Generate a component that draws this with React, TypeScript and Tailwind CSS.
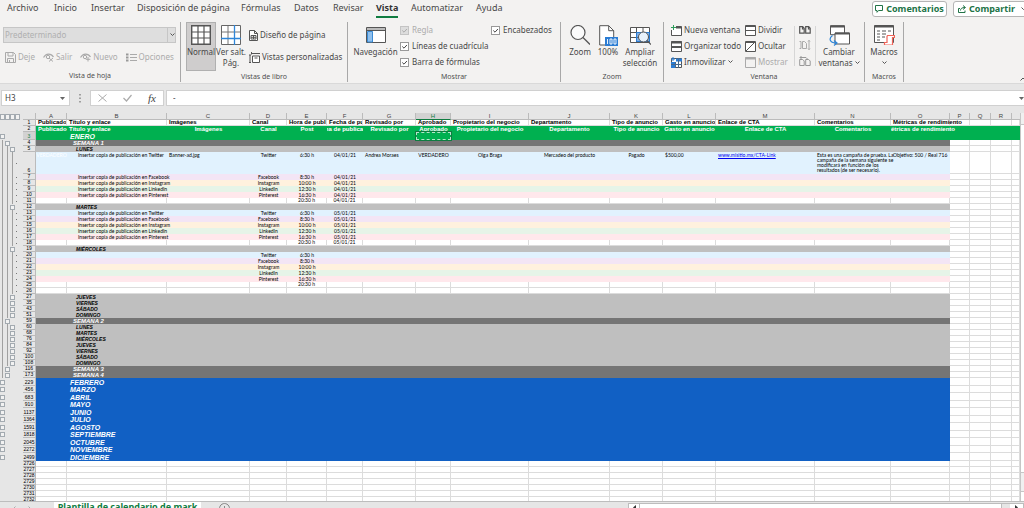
import type { ReactNode } from 'react';

/* ---------- icons ---------- */

type IconProps = { children: ReactNode; box: string; size: string };
function Svg({ children, box, size }: IconProps) {
  return (
    <svg viewBox={box} className={`shrink-0 ${size}`} fill="none" stroke="#555" aria-hidden="true">
      {children}
    </svg>
  );
}

const SaveIcon = () => (
  <Svg box="0 0 11 11" size="h-[11px] w-[11px]">
    <path d="M.5.5h8l2 2v8H.5zM3 .5v3.500h5v-3.500M2.500 10.500v-4h6v4M4.500 8v2" stroke="#aaa" />
  </Svg>
);
const EyeIcon = ({ add }: { add?: boolean }) => (
  <Svg box="0 0 11 9" size="h-[9px] w-[11px]">
    <path d="M.5 4.500C3 0 8 0 10.500 4" stroke="#aaa" strokeWidth="1.200" />
    <circle cx="5" cy="4" r="1.700" stroke="#aaa" />
    {add ? <path d="M8 4v4.500M5.800 6.300h4.500" stroke="#aaa" /> : <path d="M6 5l4 3.500M10 5L6 8.500" stroke="#aaa" />}
  </Svg>
);
const ListIcon = () => (
  <Svg box="0 0 11 9" size="h-[9px] w-[11px]">
    <path d="M0 1.500h2.500M0 4.500h2.500M0 7.500h2.500" stroke="#999" strokeWidth="2" />
    <path d="M4 1.500h7M4 4.500h7M4 7.500h7" stroke="#aaa" />
  </Svg>
);
const GridIcon = () => (
  <Svg box="0 0 20 20" size="h-5 w-5">
    <path d="M.7.7h18.600v18.600H.7z" fill="#fff" strokeWidth="1.400" />
    <path d="M7 1v18M13 1v18M1 7h18M1 13h18" strokeWidth="1.200" />
  </Svg>
);
const PageBreakIcon = () => (
  <Svg box="0 0 20 20" size="h-5 w-5">
    <path d="M.5.5h19v19H.5z" fill="#fff" stroke="#666" />
    <path d="M7 1v12M1 7h12M7 14v5M14 7h5" stroke="#777" />
    <path d="M13.500 0v20M0 13.500h20" stroke="#2f86d8" strokeWidth="1.300" />
  </Svg>
);
const PageLayoutIcon = () => (
  <Svg box="0 0 9 11" size="h-[11px] w-[9px]">
    <path d="M.5.5h5l3 3v7h-8zM5.500.5v3h3" fill="#fff" />
    <path d="M2 5.500h5v3.500H2zM4.500 5.500v3.500M2 7.300h5" />
  </Svg>
);
const CustomViewsIcon = () => (
  <Svg box="0 0 11 11" size="h-[11px] w-[11px]">
    <path d="M3.500 4h7v6.500h-7z" fill="#fff" />
    <path d="M2.500 1.500h8.500M2.500 0v2.500M0 3h2M0 10.500h2M1 3v7.500M5.500 6h3" />
  </Svg>
);
const NavIcon = () => (
  <Svg box="0 0 20 16" size="h-4 w-5">
    <path d="M.5.5h19v15H.5z" fill="#fff" />
    <path d="M1 1h18v2.500H1z" fill="#bbb" stroke="none" />
    <path d="M.5 3.500h19" />
    <path d="M1.500 4.500h5v10.500h-5z" fill="#8fc0ee" stroke="#3b8bd4" />
  </Svg>
);
const MagnifierIcon = () => (
  <Svg box="0 0 20 20" size="h-5 w-5">
    <circle cx="8" cy="7.500" r="7" fill="#fbfbfb" strokeWidth="1.200" />
    <path d="M13 12.500l7 7" strokeWidth="1.300" />
  </Svg>
);
const HundredIcon = () => (
  <Svg box="0 0 19 21" size="h-[21px] w-[19px]">
    <path d="M.7.700h9l5 5v14.300H.7z" fill="#fff" />
    <path d="M9.700.7v5h5" />
    <path d="M6 12h13v9H6z" fill="#2b7cd3" stroke="none" />
    <path d="M8.500 14v5M11 14h2v5h-2zM15 14h2v5h-2z" stroke="#fff" strokeWidth=".9" />
  </Svg>
);
const ZoomSelectionIcon = () => (
  <Svg box="0 0 21 19" size="h-[19px] w-[21px]">
    <path d="M.5 1.500h19v15H.5zM.5 6.500h19M.5 11.500h19M6.500 1.500v15M13 1.500v15" fill="#fff" />
    <path d="M6.500 6.500h13v9h-13z" fill="#2b7cd3" fillOpacity=".6" stroke="#2b7cd3" />
    <circle cx="13.500" cy="11" r="5" fill="#e8f2fc" />
    <path d="M17 14.500l4 4" strokeWidth="1.200" />
  </Svg>
);
const NewWindowIcon = () => (
  <Svg box="0 0 11 11" size="h-[11px] w-[11px]">
    <path d="M5 1.500h5.500v9H.5V5" fill="#fff" />
    <path d="M5 2.500h5.500" strokeWidth="2" />
    <path d="M2.500 0v5M0 2.500h5" stroke="#2e9e5b" />
  </Svg>
);
const ArrangeIcon = () => (
  <Svg box="0 0 11 11" size="h-[11px] w-[11px]">
    <path d="M.5.5h10v10H.5z" fill="#fff" />
    <path d="M0 1.500h11M0 6h11" strokeWidth="2" />
  </Svg>
);
const FreezeIcon = () => (
  <Svg box="0 0 11 11" size="h-[11px] w-[11px]">
    <path d="M.5 1.500h10v9H.5z" fill="#fff" />
    <path d="M5 1.500h6v3H5zM0 5h4v6H0z" fill="#2b7cd3" stroke="none" />
    <path d="M0 7.500h11M4.500 5v6M7.500 2v9" stroke="#4a6a8a" />
    <path d="M2 0v4M0 2h4" stroke="#2b7cd3" />
  </Svg>
);
const SplitIcon = () => (
  <Svg box="0 0 11 11" size="h-[11px] w-[11px]">
    <path d="M.5.5h10v10H.5zM0 5.500h11M1 1.500h9" fill="#fff" />
  </Svg>
);
const HideIcon = () => (
  <Svg box="0 0 11 11" size="h-[11px] w-[11px]">
    <path d="M.5.5h10v10H.5zM1 10l9-9M1 1.500h9" fill="#fff" />
  </Svg>
);
const ShowIcon = () => (
  <Svg box="0 0 11 11" size="h-[11px] w-[11px]">
    <path d="M.5.5h10v10H.5z" stroke="#aaa" />
    <path d="M0 1.500h11" stroke="#aaa" strokeWidth="2" />
  </Svg>
);
const SideBySideIcon = () => (
  <Svg box="0 0 12 8" size="h-2 w-3">
    <path d="M.7.7h3l1.500 1.500v5H.7zM6.700.7h3l1.500 1.500v5H6.700zM3.500 0v3h2M9.500 0v3h2" strokeWidth="1.200" />
  </Svg>
);
const SyncIcon = () => (
  <Svg box="0 0 12 10" size="h-[10px] w-3">
    <path d="M.5 1.500h1.500v7H.5M3.500 1.500h2l2 2v5h-4zM10 0v10M9 1.500l1-1 1 1M9 8.500l1 1 1-1" stroke="#aaa" />
  </Svg>
);
const ResetIcon = () => (
  <Svg box="0 0 12 11" size="h-[11px] w-3">
    <path d="M.7 4.500h3l1.500 1.500v4.500H.7zM6.700 4.500h3l1.500 1.500v4.500H6.700zM1 2.500h6l1.500 1.500M2.500 1L1 2.500 2.500 4" stroke="#999" />
  </Svg>
);
const SwitchIcon = () => (
  <Svg box="0 0 21 21" size="h-[21px] w-[21px]">
    <path d="M1.500.7h14v9h-14z" fill="#fff" />
    <path d="M1.500 1.500h14" strokeWidth="2" />
    <path d="M6 8h14.500v11H6z" fill="#fff" />
    <path d="M6 8.500h14.500" strokeWidth="2" />
    <path d="M3.500 10.500c-4 3-3 7 3.500 7.500M5 15.500l3 2.500-3 2.500" stroke="#2f86d8" strokeWidth="1.200" />
  </Svg>
);
const MacrosIcon = () => (
  <Svg box="0 0 21 20" size="h-5 w-[21px]">
    <path d="M.5.5h19v17H.5z" fill="#fff" />
    <path d="M.5 1.500h19" strokeWidth="2" />
    <path d="M3 6h3M8 6h4M14 6h3M3 9h3M8 9h4M3 12h3M8 12h3M3 15h3" />
    <path d="M13.500 10.500h7v2h-2v7.500h-8v-2.500h2.500v-6z" fill="#fff" stroke="#f0655a" strokeWidth="1.200" />
  </Svg>
);
const Chevron = () => (
  <Svg box="0 0 5 4" size="h-1 w-[5px]">
    <path d="M.5.5l2 2 2-2" />
  </Svg>
);

/* ---------- ribbon ---------- */

function Group({ label, width, children }: { label: string; width: string; children: ReactNode }) {
  return (
    <section className={`flex h-[60px] shrink-0 flex-col border-r border-[#a8a8a8] ${width}`}>
      <div className="flex h-[50px]">{children}</div>
      <h2 className="text-center text-[7px] leading-[12px] text-[#505050]">{label}</h2>
    </section>
  );
}

function Small({ icon, label, off, arrow }: { icon: ReactNode; label: string; off?: boolean; arrow?: boolean }) {
  return (
    <button
      type="button"
      disabled={off}
      className={`flex h-4 items-center gap-[2px] whitespace-nowrap text-[8px] ${off ? 'text-[#ababab]' : 'text-[#484848]'}`}
    >
      {icon}
      <span>{label}</span>
      {arrow && <Chevron />}
    </button>
  );
}

function Big({ icon, width, active, children }: { icon: ReactNode; width: string; active?: boolean; children: ReactNode }) {
  return (
    <button
      type="button"
      className={`flex h-[49px] shrink-0 flex-col items-center whitespace-nowrap pt-px text-[8px] leading-[11px] text-[#484848] ${width} ${active ? 'border border-[#b0b0b0] bg-[#cfcdcd]' : 'border border-transparent'}`}
    >
      <span className="flex h-[22px] items-center">{icon}</span>
      <span>{children}</span>
    </button>
  );
}

function Check({ label, off }: { label: string; off?: boolean }) {
  return (
    <label className={`flex h-4 items-center gap-[3px] whitespace-nowrap text-[8px] ${off ? 'text-[#ababab]' : 'text-[#484848]'}`}>
      <span className="grid h-[9px] w-[9px]">
        <input
          type="checkbox"
          defaultChecked
          disabled={off}
          className="col-start-1 row-start-1 h-[9px] w-[9px] appearance-none border border-[#999] bg-white disabled:border-[#c4c4c4] disabled:bg-[#ddd]"
        />
        <svg viewBox="0 0 9 9" className="pointer-events-none col-start-1 row-start-1 h-[9px] w-[9px]" fill="none" stroke={off ? '#aaa' : '#444'} aria-hidden="true">
          <path d="M2.300 4.500L4 6.200 6.900 3" />
        </svg>
      </span>
      {label}
    </label>
  );
}

const TABS = [
  { name: 'Archivo', width: 'w-[47px]' },
  { name: 'Inicio', width: 'w-[37px]' },
  { name: 'Insertar', width: 'w-[46px]' },
  { name: 'Disposición de página', width: 'w-[104px]' },
  { name: 'Fórmulas', width: 'w-[53px]' },
  { name: 'Datos', width: 'w-[39px]' },
  { name: 'Revisar', width: 'w-[43px]' },
  { name: 'Vista', width: 'w-[35px]' },
  { name: 'Automatizar', width: 'w-[65px]' },
  { name: 'Ayuda', width: 'w-[40px]' },
];

function TopBar() {
  return (
    <nav className="flex h-5 shrink-0 overflow-hidden pl-[7px]">
      {TABS.map((t) => (
        <div key={t.name} className={`flex shrink-0 items-start ${t.width}`}>
          <a
            href="#"
            className={`whitespace-nowrap text-[9px] leading-[16px] ${t.name === 'Vista' ? 'border-b-2 border-[#107c41] font-bold text-[#333]' : 'text-[#484848]'}`}
          >
            {t.name}
          </a>
        </div>
      ))}
      <div className="-mr-3 ml-auto flex gap-[6px] pt-px">
        <button type="button" className="flex h-4 w-[75px] items-center justify-center gap-[3px] rounded-[3px] border border-[#b5b5b5] bg-white text-[9px] font-bold text-[#217346]">
          <Svg box="0 0 8 8" size="h-2 w-2"><path d="M.5.5h7v5H3.500L2 7.300V5.500H.5z" stroke="#217346" /></Svg>
          Comentarios
        </button>
        <button type="button" className="flex h-4 w-[83px] items-center gap-[3px] rounded-[3px] border border-[#b5b5b5] bg-white pl-1 text-[9px] font-bold text-[#217346]">
          <Svg box="0 0 8 8" size="h-2 w-2"><path d="M2 3.500H.5v4h6.500V5.500M2.500 5.500C2.500 3.500 4 2.500 7 2.500M5 .5l2.500 2L5 4.500" stroke="#217346" /></Svg>
          Compartir
          <span className="pl-[3px]"><Chevron /></span>
        </button>
      </div>
    </nav>
  );
}

function Ribbon() {
  return (
    <div className="flex h-[63px] shrink-0 overflow-hidden pt-[2px]">
      <Group label="Vista de hoja" width="w-[181px]">
        <div className="flex w-full flex-col gap-[6px] pl-[3px] pt-[5px]">
          <div className="grid w-[173px]">
            <select disabled aria-label="Vista de hoja" className="col-start-1 row-start-1 h-4 appearance-none border border-[#c6c6c6] bg-[#dedede] pl-px text-[8px] text-[#b0b0b0] opacity-100">
              <option>Predeterminado</option>
            </select>
            <span className="pointer-events-none col-start-1 row-start-1 flex w-[9px] items-center justify-center justify-self-end border-l border-[#c6c6c6]">
              <Chevron />
            </span>
          </div>
          <div className="flex gap-2 pl-[2px]">
            <Small icon={<SaveIcon />} label="Deje" off />
            <Small icon={<EyeIcon />} label="Salir" off />
            <Small icon={<EyeIcon add />} label="Nuevo" off />
            <Small icon={<ListIcon />} label="Opciones" off />
          </div>
        </div>
      </Group>

      <Group label="Vistas de libro" width="w-[167px]">
        <div className="flex pl-[5px]">
          <Big icon={<GridIcon />} width="w-[30px]" active>Normal</Big>
          <Big icon={<PageBreakIcon />} width="w-[30px]">Ver salt.<br />Pág.</Big>
          <div className="flex flex-col gap-[6px] pl-[3px] pt-[5px]">
            <Small icon={<PageLayoutIcon />} label="Diseño de página" />
            <Small icon={<CustomViewsIcon />} label="Vistas personalizadas" />
          </div>
        </div>
      </Group>

      <Group label="Mostrar" width="w-[213px]">
        <div className="flex pl-[3px]">
          <Big icon={<NavIcon />} width="w-[49px]">Navegación</Big>
          <div className="flex w-[91px] flex-col">
            <Check label="Regla" off />
            <Check label="Líneas de cuadrícula" />
            <Check label="Barra de fórmulas" />
          </div>
          <div><Check label="Encabezados" /></div>
        </div>
      </Group>

      <Group label="Zoom" width="w-[103px]">
        <div className="flex pl-1">
          <Big icon={<MagnifierIcon />} width="w-[30px]">Zoom</Big>
          <Big icon={<HundredIcon />} width="w-[26px]">100%</Big>
          <Big icon={<ZoomSelectionIcon />} width="w-[38px]">Ampliar<br />selección</Big>
        </div>
      </Group>

      <Group label="Ventana" width="w-[201px]">
        <div className="flex pl-[7px]">
          <div className="flex w-[74px] flex-col">
            <Small icon={<NewWindowIcon />} label="Nueva ventana" />
            <Small icon={<ArrangeIcon />} label="Organizar todo" />
            <Small icon={<FreezeIcon />} label="Inmovilizar" arrow />
          </div>
          <div className="flex w-[49px] flex-col">
            <Small icon={<SplitIcon />} label="Dividir" />
            <Small icon={<HideIcon />} label="Ocultar" />
            <Small icon={<ShowIcon />} label="Mostrar" off />
          </div>
          <div className="mt-1 flex h-10 w-[22px] flex-col items-center justify-between border-x border-[#d6d6d6]">
            <button type="button" aria-label="Ver en paralelo"><SideBySideIcon /></button>
            <button type="button" aria-label="Desplazamiento sincrónico" disabled><SyncIcon /></button>
            <button type="button" aria-label="Restablecer posición"><ResetIcon /></button>
          </div>
          <Big icon={<SwitchIcon />} width="w-[46px]">
            Cambiar<br />
            <span className="inline-flex items-center gap-[2px]">ventanas <Chevron /></span>
          </Big>
        </div>
      </Group>

      <Group label="Macros" width="w-[39px]">
        <Big icon={<MacrosIcon />} width="w-[38px]">
          Macros
          <span className="flex h-[11px] items-center justify-center"><Chevron /></span>
        </Big>
      </Group>

      <button type="button" aria-label="Contraer la cinta" className="-mr-[2px] ml-auto self-end pb-[2px]">
        <Svg box="0 0 6 4" size="h-1 w-[6px]"><path d="M.5 3.500L3 1l2.500 2.500" /></Svg>
      </button>
    </div>
  );
}

function FormulaBar() {
  return (
    <div className="flex h-[30px] shrink-0 items-start border-t border-[#d9d9d9] bg-[#e6e6e6] pt-[6px] text-[#444]">
      <div className="ml-px flex h-4 w-[69px] items-center justify-between border border-[#d0d0d0] bg-white pl-[3px] pr-1">
        <input aria-label="Cuadro de nombres" defaultValue="H3" className="w-10 text-[8px] outline-none" />
        <Svg box="0 0 5 3" size="h-[3px] w-[5px]"><path d="M0 0h5L2.500 3z" fill="#666" stroke="none" /></Svg>
      </div>
      <div className="flex h-4 w-5 items-center justify-center">
        <Svg box="0 0 2 9" size="h-[9px] w-[2px]"><path d="M1 0v1.500M1 3.500v1.500M1 7v1.500" stroke="#888" strokeWidth="1.500" /></Svg>
      </div>
      <div className="flex h-4 w-[74px] items-center justify-between border border-[#d0d0d0] bg-white px-[7px]">
        <button type="button" aria-label="Cancelar"><Svg box="0 0 9 8" size="h-2 w-[9px]"><path d="M.5.5l8 7M8.500.5l-8 7" stroke="#aaa" /></Svg></button>
        <button type="button" aria-label="Introducir"><Svg box="0 0 9 8" size="h-2 w-[9px]"><path d="M.5 4l3 3 5-6" stroke="#aaa" strokeWidth="1.200" /></Svg></button>
        <button type="button" aria-label="Insertar función" className="font-['Liberation_Serif',serif] text-[11px] italic leading-none">fx</button>
      </div>
      <div className="ml-[2px] flex h-4 flex-1 items-center border-y border-l border-[#d0d0d0] bg-white pl-[6px]">
        <input aria-label="Barra de fórmulas" defaultValue="-" className="min-w-0 flex-1 text-[8px] outline-none" />
        <Svg box="0 0 5 3" size="h-[3px] w-[5px]"><path d="M0 0h5L2.500 3z" fill="#666" stroke="none" /></Svg>
      </div>
    </div>
  );
}

/* ---------- sheet ---------- */

const COLS = [
  'w-[31px]', 'w-[100px]', 'w-[83px]', 'w-[37px]', 'w-[40px]', 'w-[36px]', 'w-[53px]', 'w-[35px]', 'w-[78px]',
  'w-[81px]', 'w-[53px]', 'w-[53px]', 'w-[99px]', 'w-[76px]', 'w-[59px]', 'w-[20px]', 'w-[21px]', 'w-[21px]', '',
];
const LETTERS = 'ABCDEFGHIJKLMNOPQR'.split('');

const TITLES = [
  'Publicado', 'Título y enlace', 'Imágenes', 'Canal', 'Hora de publicación', 'Fecha de publicación', 'Revisado por', 'Aprobado',
  'Propietario del negocio', 'Departamento', 'Tipo de anuncio', 'Gasto en anuncio', 'Enlace de CTA', 'Comentarios',
  'Métricas de rendimiento',
];
const SUBTITLES = TITLES.map((t, i) => (i === 4 ? 'Post' : t));

type Kind =
  | 'title' | 'subtitle' | 'monthOpen' | 'week' | 'day' | 'first' | 'blue' | 'purple' | 'orange' | 'green' | 'pink' | 'plain' | 'month' | 'monthTall' | 'empty';
type Row = { n: number; kind: Kind; gutter: string; cells: ReactNode[] };

const FILL: Record<Kind, string> = {
  title: 'bg-white',
  subtitle: 'bg-[#00b050]',
  monthOpen: 'bg-[#00b050]',
  week: 'bg-[#757575]',
  day: 'bg-[#bfbfbf]',
  first: 'bg-[#e1f2fe]',
  blue: 'bg-[#e1f2fe]',
  purple: 'bg-[#f3e5f5]',
  orange: 'bg-[#fff1de]',
  green: 'bg-[#e6f4e8]',
  pink: 'bg-[#ffe8ec]',
  plain: 'bg-white',
  month: 'bg-[#1160c4]',
  monthTall: 'bg-[#1160c4]',
  empty: 'bg-white',
};
const HEIGHT: Record<Kind, string> = {
  title: 'h-[6px]', subtitle: 'h-[6px]', monthOpen: 'h-[8px]', week: 'h-[6px]', day: 'h-[6px]', first: 'h-[22px]',
  blue: 'h-[6px]', purple: 'h-[6px]', orange: 'h-[6px]', green: 'h-[6px]', pink: 'h-[6px]', plain: 'h-[6px]',
  month: 'h-[7px]', monthTall: 'h-[8px]', empty: 'h-[6px]',
};

/* Gutter codes, one character per outline level: b = toggle, l = line, d = dot, - = nothing */
const NETS: [string, string, Kind][] = [
  ['Twitter', '6:30 h', 'blue'],
  ['Facebook', '8:30 h', 'purple'],
  ['Instagram', '10:00 h', 'orange'],
  ['LinkedIn', '12:30 h', 'green'],
  ['Pinterest', '16:30 h', 'pink'],
  ['', '20:30 h', 'plain'],
];
const posts = (start: number, date: string, copy: boolean): Row[] =>
  NETS.map(([net, hour, kind], i) => ({
    n: start + i,
    kind,
    gutter: 'llld',
    cells: ['', copy && net ? `Insertar copia de publicación en ${net}` : '', '', net, hour, date],
  }));
const day = (n: number, name: string): Row => ({ n, kind: 'day', gutter: 'llb-', cells: ['', name] });
const week = (n: number, name: string): Row => ({ n, kind: 'week', gutter: 'lb--', cells: ['', name] });
const MONTHS: [number, string][] = [
  [229, 'FEBRERO'], [456, 'MARZO'], [683, 'ABRIL'], [910, 'MAYO'], [1137, 'JUNIO'], [1364, 'JULIO'], [1591, 'AGOSTO'],
  [1818, 'SEPTIEMBRE'], [2045, 'OCTUBRE'], [2272, 'NOVIEMBRE'], [2499, 'DICIEMBRE'],
];

const ROWS: Row[] = [
  { n: 1, kind: 'title', gutter: '----', cells: TITLES },
  { n: 2, kind: 'subtitle', gutter: '----', cells: SUBTITLES },
  { n: 3, kind: 'monthOpen', gutter: 'b---', cells: ['', 'ENERO'] },
  week(4, 'SEMANA 1'),
  day(5, 'LUNES'),
  {
    n: 6, kind: 'first', gutter: 'llld',
    cells: [
      'VERDADERO', 'Insertar copia de publicación en Twitter', 'Banner-ad.jpg', 'Twitter', '6:30 h', '04/01/21', 'Andrea Moraes', 'VERDADERO',
      'Olga Braga', 'Mercadeo del producto', 'Pagado', '$500,00',
      <a href="#" className="text-[#0000ee] underline">www.misitio.mx/CTA-Link</a>,
      <>
        Esta es una campaña de prueba. La<br />
        campaña de la semana siguiente se<br />
        modificará en función de los<br />
        resultados (de ser necesario).
      </>,
      'Objetivo: 500 / Real 716',
    ],
  },
  ...posts(6, '04/01/21', true).slice(1),
  day(12, 'MARTES'),
  ...posts(13, '05/01/21', true),
  day(19, 'MIÉRCOLES'),
  ...posts(20, '', false),
  { n: 26, kind: 'plain', gutter: 'llld', cells: [] },
  day(27, 'JUEVES'), day(35, 'VIERNES'), day(43, 'SÁBADO'), day(51, 'DOMINGO'),
  week(59, 'SEMANA 2'),
  day(60, 'LUNES'), day(68, 'MARTES'), day(76, 'MIÉRCOLES'), day(84, 'JUEVES'), day(92, 'VIERNES'), day(100, 'SÁBADO'), day(108, 'DOMINGO'),
  week(116, 'SEMANA 3'),
  week(173, 'SEMANA 4'),
  ...MONTHS.map(([n, name], i): Row => ({ n, kind: i % 2 ? 'month' : 'monthTall', gutter: 'b---', cells: ['', name] })),
  ...[2726, 2727, 2728, 2729, 2730, 2731, 2732].map((n): Row => ({ n, kind: 'empty', gutter: '----', cells: [] })),
];

const SLOTS = ['w-[5px]', 'w-[5px]', 'w-[6px]', 'w-[7px]'];
function Gutter({ code, height, n }: { code: string; height: string; n: number }) {
  return (
    <div className={`flex ${height}`}>
      {code.split('').map((c, i) => (
        <div key={i} className={`flex items-center ${SLOTS[i]}`}>
          {c === 'b' && <button type="button" aria-label={`Esquema de la fila ${n}`} className="h-[5px] w-[5px] shrink-0 border border-[#a3aab0] bg-[#f2f2f2]" />}
          {c === 'l' && <div className="ml-[2px] h-full w-px bg-[#a0a0a0]" />}
          {c === 'd' && <div className="h-px w-px bg-[#777]" />}
        </div>
      ))}
    </div>
  );
}

const BODY = "font-['Lato',sans-serif] text-[5px]";

function cellText(kind: Kind, c: number): string {
  if (kind === 'title') return `${c < 14 ? 'overflow-hidden' : ''} pl-[2px] font-bold text-[6px] text-black`;
  if (kind === 'subtitle') return `font-bold text-[6px] text-white ${c === 14 ? '[clip-path:inset(0_-20px_0_0)]' : 'overflow-hidden'} ${c < 2 ? 'pl-[2px]' : ''}`;
  if (kind === 'monthOpen' || kind === 'month' || kind === 'monthTall') return 'pl-[3px] text-[7px] font-bold italic text-white';
  if (kind === 'week') return 'pl-[6px] text-[6px] font-bold italic text-white';
  if (kind === 'day') return 'pl-[9px] text-[5px] font-bold italic text-black';
  if (c === 0) return `${BODY} text-center text-white`;
  if (c === 1) return `${BODY} pl-[11px] text-black`;
  if (c === 2 || c === 6 || c > 10) return `${BODY} pl-[2px] text-black`;
  return `${BODY} text-center text-black`;
}

function Sheet() {
  return (
    <table className="w-full table-fixed border-separate border-spacing-0 whitespace-nowrap font-['Liberation_Sans',sans-serif] leading-[5px]">
      <colgroup>
        <col className="w-[23px]" />
        <col className="w-[13px]" />
        {COLS.map((w, i) => <col key={i} className={w} />)}
      </colgroup>
      <thead>
        <tr className="h-[7px] bg-[#e6e6e6] text-[6px] text-[#444]">
          <th className="p-0">
            <div className="flex">
              {[1, 2, 3, 4].map((l) => (
                <button key={l} type="button" aria-label={`Nivel ${l}`} className="h-[6px] w-[5px] border border-[#a3aab0] bg-[#f2f2f2]" />
              ))}
            </div>
          </th>
          <th className="border-b border-r border-[#bbb] p-0" />
          {LETTERS.map((l) => (
            <th key={l} scope="col" className={`border-b border-r p-0 text-center font-normal ${l === 'H' ? 'border-b-[#107c41] border-r-[#bbb] bg-[#d2d2d2] text-[#107c41]' : 'border-[#bbb]'}`}>
              {l}
            </th>
          ))}
          <th className="border-b border-[#bbb] p-0" />
        </tr>
      </thead>
      <tbody>
        {ROWS.map((row) => {
          const wide = row.kind === 'subtitle' || row.kind === 'monthOpen';
          const white = row.kind === 'plain' || row.kind === 'empty' || row.kind === 'title';
          return (
            <tr key={row.n} className={HEIGHT[row.kind]}>
              <td className="bg-[#e6e6e6] p-0"><Gutter code={row.gutter} height={HEIGHT[row.kind]} n={row.n} /></td>
              <th scope="row" className={`border-b border-r border-[#bbb] p-0 text-center align-bottom text-[5px] font-normal ${row.n === 3 ? 'bg-[#d2d2d2] text-[#107c41]' : 'bg-[#e6e6e6] text-black'}`}>
                {row.n}
              </th>
              {COLS.map((_, c) => {
                const filled = c < 15 || wide;
                const grid = !filled || white;
                const selected = row.n === 3 && c === 7;
                return (
                  <td
                    key={c}
                    className={`p-0 ${row.kind === 'first' ? 'pt-px align-top' : 'align-middle'} ${filled ? FILL[row.kind] : 'bg-white'} ${grid ? 'border-b border-r border-[#dcdcdc]' : ''} ${selected ? 'border border-dashed border-[#b5e6cb] outline outline-[#107c41]' : ''} ${cellText(row.kind, c)}`}
                  >
                    {row.kind === 'subtitle' && c > 1
                      ? <div className="flex justify-center">{row.cells[c]}</div>
                      : row.cells[c]}
                  </td>
                );
              })}
            </tr>
          );
        })}
      </tbody>
    </table>
  );
}

export default function App() {
  return (
    <div className="flex h-screen flex-col overflow-hidden bg-[#f3f2f1] font-['Noto_Sans','Open_Sans',sans-serif]">
      <TopBar />
      <Ribbon />
      <FormulaBar />
      <main className="flex min-h-0 flex-1 overflow-hidden bg-[#e6e6e6]">
        <div className="min-w-0 flex-1 overflow-hidden"><Sheet /></div>
        <div className="flex w-1 shrink-0 flex-col border-l border-[#c6c6c6] bg-[#f0f0f0]">
          <div className="h-3 border-b border-[#c6c6c6]" />
          <div className="flex-1 border-b border-[#c6c6c6] bg-white" />
          <div className="mt-[18px] h-[10px] border-t border-[#c6c6c6] bg-white" />
        </div>
      </main>
      <footer className="flex h-[7px] shrink-0 items-start overflow-hidden border-t border-[#bdbdbd] bg-[#e6e6e6]">
        <div className="flex w-[54px] shrink-0 gap-3 pl-3 pt-1">
          <button type="button" aria-label="Hoja anterior"><Svg box="0 0 4 6" size="h-[6px] w-1"><path d="M3.500.5L1 3l2.500 2.500" stroke="#aaa" /></Svg></button>
          <button type="button" aria-label="Hoja siguiente"><Svg box="0 0 4 6" size="h-[6px] w-1"><path d="M.5.5L3 3 .5 5.500" stroke="#aaa" /></Svg></button>
        </div>
        <button type="button" className="w-[147px] shrink-0 whitespace-nowrap bg-white text-[9px] font-bold leading-[9px] text-[#107c41]">
          Plantilla de calendario de mark
        </button>
        <button type="button" aria-label="Hoja nueva" className="ml-[18px] mt-px">
          <Svg box="0 0 11 11" size="h-[11px] w-[11px]"><path d="M5.500.5a5 5 0 1 0 .01 0M5.500 3v5M3 5.500h5" stroke="#888" /></Svg>
        </button>
        <div className="ml-auto mt-px flex h-[10px] w-[396px] border border-[#bdbdbd] bg-[#e6e6e6]">
          <span className="flex w-[10px] justify-center bg-white pt-px"><Svg box="0 0 3 5" size="h-[5px] w-[3px]"><path d="M3 0v5L0 2.500z" fill="#333" stroke="none" /></Svg></span>
          <span className="flex-1 border-x border-[#bdbdbd] bg-white" />
          <span className="ml-2 flex w-[13px] justify-center bg-white pt-px"><Svg box="0 0 3 5" size="h-[5px] w-[3px]"><path d="M0 0v5l3-2.500z" fill="#333" stroke="none" /></Svg></span>
        </div>
      </footer>
    </div>
  );
}
